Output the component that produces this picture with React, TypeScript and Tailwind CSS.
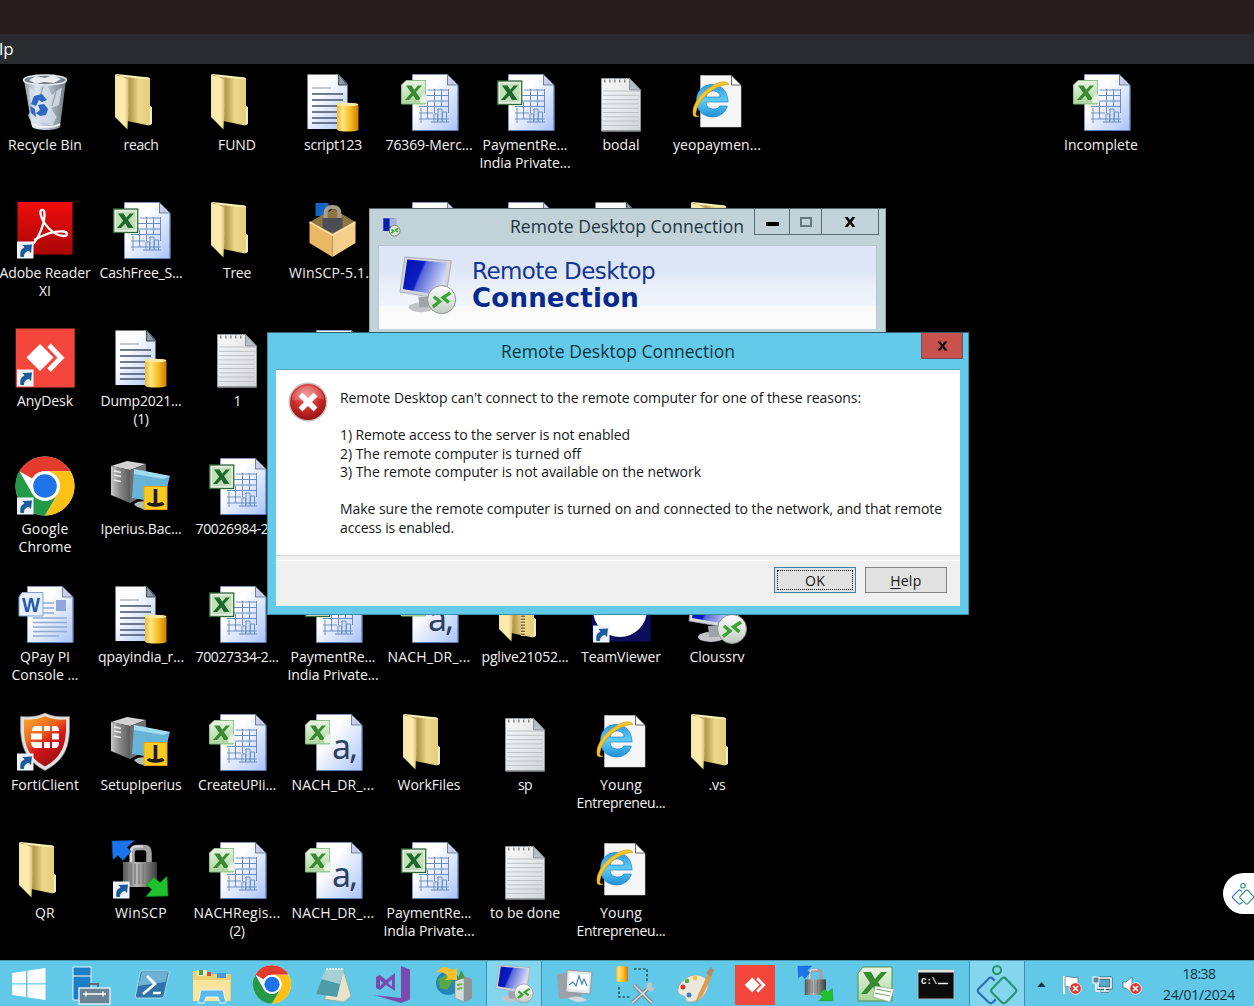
import React, { useLayoutEffect, useRef, useState } from 'react';

/* Spreads a text over a fixed width by adjusting its tracking. */
function Fit({ w, children, className = '' }: { w: number; children: string; className?: string }) {
  const ref = useRef<HTMLSpanElement>(null);
  const [ls, setLs] = useState(0);
  useLayoutEffect(() => {
    const el = ref.current;
    if (!el) return;
    setLs((w - el.getBoundingClientRect().width) / children.length);
  }, [w, children]);
  return (
    <span ref={ref} className={'inline-block whitespace-pre ' + className} style={{ letterSpacing: ls }}>
      {children}
    </span>
  );
}

const Grad = ({ id, stops, v }: { id: string; stops: [number, string][]; v?: boolean }) => (
  <linearGradient id={id} x1="0" y1="0" x2={v ? 0 : 1} y2={v ? 1 : 0}>
    {stops.map(([o, c]) => (
      <stop key={o} offset={o} stopColor={c} />
    ))}
  </linearGradient>
);

function Defs() {
  return (
    <svg className="absolute h-0 w-0">
      <defs>
        <Grad id="fFront" stops={[[0, '#f8e7a2'], [0.7, '#fbeeb4'], [1, '#d9bd62']]} />
        <Grad id="fBack" stops={[[0, '#b59a4c'], [0.35, '#b99c50'], [0.6, '#ecd78b'], [1, '#e5cb78']]} />
        <linearGradient id="page" x1="0" y1="0" x2="1" y2="1">
          <stop offset="0.35" stopColor="#fdfdff" />
          <stop offset="1" stopColor="#a9c4f5" />
        </linearGradient>
        <linearGradient id="note" x1="0" y1="0" x2="1" y2="1">
          <stop offset="0" stopColor="#fafafa" />
          <stop offset="1" stopColor="#d3d5d9" />
        </linearGradient>
        <Grad id="cyl" stops={[[0, '#f0b62c'], [0.25, '#ffe58a'], [0.6, '#fcbf24'], [1, '#c87e0a']]} />
        <Grad id="bin" stops={[[0, '#8f9ba6'], [0.3, '#dfe7ee'], [0.6, '#aebac6'], [1, '#6f7983']]} />
        <Grad id="adobe" v stops={[[0, '#f00d0d'], [1, '#a80606']]} />
        <linearGradient id="screen" x1="0" y1="0" x2="1" y2="0.35">
          <stop offset="0" stopColor="#0512a8" />
          <stop offset="0.45" stopColor="#0a1ec4" />
          <stop offset="0.5" stopColor="#5566d8" />
          <stop offset="1" stopColor="#d5dcf8" />
        </linearGradient>
        <Grad id="tower" stops={[[0, '#c9c9c9'], [0.45, '#8a8a8a'], [1, '#5b5b5b']]} />
        <Grad id="steel" stops={[[0, '#565656'], [0.4, '#b9b9b9'], [0.7, '#7b7b7b'], [1, '#3c3c3c']]} />
        <Grad id="ie" v stops={[[0, '#2a9be0'], [0.5, '#5ccdf6'], [1, '#1e8fd6']]} />
        <linearGradient id="forti" x1="0" y1="0" x2="0.6" y2="1">
          <stop offset="0" stopColor="#f9ab2c" />
          <stop offset="0.4" stopColor="#ee6a1e" />
          <stop offset="0.65" stopColor="#d4161a" />
          <stop offset="1" stopColor="#9c0f12" />
        </linearGradient>
        <Grad id="xl" v stops={[[0, '#eaf6e2'], [1, '#a8d59a']]} />
        <Grad id="disc" v stops={[[0, '#ffffff'], [1, '#c4c9c4']]} />
        <radialGradient id="err" cx="0.45" cy="0.3" r="0.75">
          <stop offset="0" stopColor="#f08080" />
          <stop offset="0.5" stopColor="#cf2b2b" />
          <stop offset="1" stopColor="#8e0d0d" />
        </radialGradient>
      </defs>
    </svg>
  );
}

const Svg = ({ children, className = 'h-16 w-16', vb = '0 0 64 64' }: { children: React.ReactNode; className?: string; vb?: string }) => (
  <svg viewBox={vb} className={'block shrink-0 overflow-visible ' + className}>
    {children}
  </svg>
);

const Shortcut = () => (
  <g>
    <rect x="4" y="41.5" width="16.5" height="17" fill="#eef2fa" />
    <path d="M7.500 57c-1-5 .5-8 4-9.500l-2-2.500 9.500-.5-1 8.500-2.300-2.300c-3 1-5 3-4.700 6.300z" fill="#1c5b9c" />
  </g>
);

const Folder = ({ zip }: { zip?: boolean }) => (
  <Svg>
    <path d="M10 3.500L41 6v28l2 1v16.500l-3 2L18 49z" fill="url(#fBack)" />
    <path d="M41 34l2 1v16.500l-2.500 1.500z" fill="#efe7c8" />
    <path d="M6 2.500l13.500 4.500v28l-1 22.500L6 45z" fill="url(#fFront)" />
    <path d="M6 2.500l2-.5L40 5.500v2L14 4.800z" fill="#f9eeb9" />
    {zip && (
      <g>
        <path d="M30 6v46" stroke="#7d6330" strokeWidth="4" />
        <path d="M30 6v46" stroke="#f5e6ae" strokeWidth="4" strokeDasharray="1.500 1.500" />
      </g>
    )}
  </Svg>
);

const Page = () => (
  <g>
    <path d="M15.500 2.500h35L61 13v45.500H15.500z" fill="url(#page)" stroke="#8ea3c8" strokeWidth=".7" />
    <path d="M50.500 2.500V13H61z" fill="#c9cfe6" stroke="#5d6880" strokeWidth=".8" />
    <path d="M16 58.500h45V14" fill="none" stroke="#5b78b5" strokeWidth="1" />
  </g>
);

const XlBadge = ({ soft }: { soft?: boolean }) => (
  <g>
    {soft ? (
      <path d="M9 8.500h19.500V32H4.500V13z" fill="url(#xl)" stroke="#8fc08a" />
    ) : (
      <g>
        <rect x="4.700" y="9" width="24" height="23.500" fill="#e3f0dd" stroke="#2f6b35" strokeWidth="1.300" />
        <rect x="7" y="11.500" width="19.500" height="18.500" fill="#c4deba" />
      </g>
    )}
    <path d="M9 13.500h5.500l2.800 4.200 3.700-4.200h4l-6 6.500 5.500 8h-5.500l-2.800-4.500-4 4.500H8l6.200-7.200z" fill={soft ? '#3c8a35' : '#1c6b2c'} />
    {soft && <path d="M22 28l5-7 3 3v7h-6z" fill="#e6f5e0" />}
  </g>
);

const Grid = () => (
  <g stroke="#6f8fc4" strokeWidth="1" fill="none">
    <path d="M31 18h20M29 23.500h23M29 29h23M22 34.500h30M22 41h14M22 47h30M37.500 17v24M44.500 17v18M51.500 17v24M30.500 30v17M24 36v15" />
    <path d="M37 50V42h3.500v8M41 50V37h4v13M45.500 50v-10h4v10M34 50h18" />
  </g>
);

const Excel = ({ soft }: { soft?: boolean }) => (
  <Svg><Page /><Grid /><XlBadge soft={soft} /></Svg>
);

const Csv = () => (
  <Svg>
    <Page />
    <text x="31" y="47" fontSize="34" textLength="26" fontFamily="'Noto Sans', sans-serif" fill="#2c4063">a,</text>
    <XlBadge soft />
  </Svg>
);

const Word = () => (
  <Svg>
    <g transform="translate(-1 0)"><Page /></g>
    <path d="M30 19h11M30 24h11M30 29h11M20 34h34M20 38.500h34M20 43h34M20 47.500h34M20 52h26" stroke="#93a9d2" strokeWidth="1.300" />
    <rect x="43" y="16" width="10" height="11" fill="#8fa5dc" />
    <path d="M9 8.500h21V32H6V13z" fill="#e9f0fb" stroke="#7da1d8" />
    <text x="9" y="28" fontSize="20" fontWeight="bold" textLength="18" lengthAdjust="spacingAndGlyphs" fontFamily="'Liberation Sans', sans-serif" fill="#1f5cad">W</text>
  </Svg>
);

const Sql = () => (
  <Svg>
    <path d="M6.500 2.500H38L46.500 12v45H6.500z" fill="url(#page)" />
    <path d="M37.500 2.500V13h9z" fill="#8f9aa8" stroke="#3c4654" />
    <path d="M11 16h19" stroke="#8a97ad" />
    <path d="M11 22h31M11 28h31M11 34h31M11 40h25M11 46h25M11 51h25" stroke="#44536c" strokeWidth="1.300" />
    <path d="M36 32.500c3-2 19-2 21.500 0V58c-3 2-18 2-21.500 0z" fill="url(#cyl)" />
    <ellipse cx="46.800" cy="32.500" rx="10.500" ry="1.800" fill="#ffe9a0" />
  </Svg>
);

const Txt = () => (
  <Svg>
    <path d="M12.500 6.500h28L51.500 18v41H12.500z" fill="url(#note)" stroke="#aab0b6" strokeWidth=".6" />
    <path d="M40.500 6.500V18h11z" fill="#b9bec5" stroke="#7d838b" strokeWidth=".8" />
    <path d="M15 9h24" stroke="#80868c" strokeWidth="3" strokeDasharray="1.500 3.500" />
    <path d="M14 19h36M14 23.300h36M14 27.600h36M14 31.900h36M14 36.200h36M14 40.500h36M14 44.800h36M14 49.100h36M14 53.400h36" stroke="#b9bec5" strokeWidth=".9" />
    <path d="M13 59h38.500" stroke="#7f8892" strokeWidth="1.400" />
  </Svg>
);

const IE = () => (
  <Svg>
    <path d="M15.500 3.500h31L56 13v42H15.500z" fill="#f6f6f6" stroke="#d8d8d8" strokeWidth=".5" />
    <path d="M46.500 3.500V13H56z" fill="#fff" stroke="#555" strokeWidth=".9" />
    <path fillRule="evenodd" d="M27 12.500c9 0 16 6.500 16 17.500H21c.5 4.500 3.500 7 7.500 7 3 0 5-1 6.500-3h7.500c-2.500 7-8 11-15 11-9.500 0-16-6.500-16-16.200 0-9.800 6.500-16.300 15.500-16.300zM21.300 25h14c-.7-3.700-3.300-6-7-6s-6.300 2.300-7 6z" fill="url(#ie)" stroke="#2788c4" strokeWidth=".7" />
    <path d="M44 13c-2-5-9-4-17 1C15 21 7 33 8 42c.5 3 3 3.500 6 2-3 .5-3.500-1-3-4 1.500-9 10-19 20-24 6-3 11-4 13-3z" fill="#f5c52c" stroke="#d59b14" strokeWidth=".6" />
  </Svg>
);

const Bin = () => (
  <Svg>
    <path d="M11 8h42l-6 47c-3 4-24 4-28 0z" fill="url(#bin)" />
    <path d="M16 15l8 6 10-8 5 10 10-8-3 18-8 3 6 8-5 10-12-5-8 4-4-10 6-8-4-6z" fill="#d9e1ea" opacity=".8" />
    <path d="M30 15l-3 10M43 20l-4 14M40 38l5 8" stroke="#94a0ad" strokeWidth="1.200" fill="none" />
    <ellipse cx="32" cy="8" rx="21.500" ry="5" fill="#74808a" stroke="#e8eef2" strokeWidth="1.500" />
    <path d="M16 8l7-4 9 2 8-3 8 4-7 4-10-1-8 2z" fill="#e9eef2" />
    <path d="M18 32l3-8 8-2 5 6-5 2-3-2-3 6zM25 33l6-1 4 5-2 6-6 1-4-3 4-3zM17 34l5 3 1 8-5-4z" fill="#2c68c4" />
    <path d="M19 52c6 4 22 4 28 0" fill="none" stroke="#eef2f4" strokeWidth="2" />
  </Svg>
);

const Adobe = () => (
  <Svg>
    <rect x="4.500" y="2" width="55" height="52.500" fill="url(#adobe)" />
    <path d="M19 45c7-7 13-22 12.500-32-.3-4.500-5-4-4 .5C29 23 40 36 51 36c4.500 0 3.500-4-.5-4.500-8.500-1-20 3-29.500 8.500" fill="none" stroke="#fff" strokeWidth="2.300" />
    <Shortcut />
  </Svg>
);

const AnyMark = () => (
  <g fill="#fff">
    <path d="M13.500 29.500L27 16l13.500 13.500L27 43z" />
    <path d="M35 18l4-4 15.500 15.500L39 45l-4-4 11.500-11.500z" transform="translate(3.500 2.500) scale(.88 .92)" />
  </g>
);

const AnyDesk = () => (
  <Svg>
    <rect x="2.700" y=".5" width="59" height="59" fill="#f4463a" />
    <AnyMark />
    <Shortcut />
  </Svg>
);

const ChromeMark = () => (
  <g>
    <circle cx="32" cy="30" r="29.500" fill="#fff" />
    <path d="M32 .5a29.500 29.500 0 0 1 25.500 14.700H32A14.800 14.800 0 0 0 19.200 22.600L6.400 15.200A29.500 29.500 0 0 1 32 .5z" fill="#e33b2e" />
    <path d="M57.600 15.200A29.500 29.500 0 0 1 32 59.500l12.800-22.100A14.800 14.800 0 0 0 45 22.800 14.800 14.800 0 0 0 32 15.200z" fill="#fbc116" />
    <path d="M6.400 15.200A29.500 29.500 0 0 0 32 59.500l12.800-22.100a14.800 14.800 0 0 1-25.600 0z" fill="#249a48" />
    <circle cx="32" cy="30" r="14.800" fill="#fff" />
    <circle cx="32" cy="30" r="11.800" fill="#1f74ea" />
  </g>
);
const Chrome = () => (<Svg><ChromeMark /><Shortcut /></Svg>);

const Iperius = () => (
  <Svg>
    <path d="M2 10L18 5l19 3-16 6z" fill="#d2d2d2" />
    <path d="M2 10l19 4v33L2 39z" fill="url(#tower)" />
    <path d="M21 14l16-6v30l-16 9z" fill="#6e6e6e" />
    <path d="M5 15l7 1.500M5 19l7 1.500M5 24l7 1.500" stroke="#eee" strokeWidth="1.500" />
    <path d="M25 13l36 7-7 27-31-5z" fill="#68b4d8" />
    <path d="M25 13l36 7-6 3-30-5z" fill="#a2dcee" />
    <path d="M25 48c6-4 14-3 20 0l-3 5c-7 1-14-1-17-5z" fill="#b7bdbf" />
    <rect x="35" y="30.500" width="23" height="23" fill="#f8ca22" stroke="#e7a60c" />
    <path d="M46.500 33v15M39 47c2 2.500 13 2.500 15.500 0" fill="none" stroke="#1d1a10" strokeWidth="3.600" />
  </Svg>
);

const Forti = () => (
  <Svg>
    <path d="M32 1c8 4 16 4 24.500 3.500.5 24 0 41-24.500 54C8 46 7 28 7.500 4.500 16 5 24 5 32 1z" fill="#dfe1e2" stroke="#888" strokeWidth=".7" />
    <path d="M32 4c7 3.500 14 4 21 3.500C53.500 29 52 43 32 54.500 12 43 10.500 29 11 7.500 18 8 25 7.500 32 4z" fill="url(#forti)" />
    <path d="M23 14h6v5h-10q0-5 4-5zM31 14h6v5h-6zM39 14h3q4 0 4 5h-7zM18 21.500h11v6H18zM39 21.500h7v6h-7zM18 30h11v6h-6q-5 0-5-6zM31 30h6v6h-6zM39 30h7q0 6-4 6h-3z" fill="#fff" />
    <Shortcut />
  </Svg>
);

const Lock = () => (
  <g>
    <path d="M23 22V13Q23 7.500 28 7.500h7q5 0 5 5.500v9" fill="none" stroke="#a3a3a3" strokeWidth="5.500" />
    <path d="M22 22V12Q22 6.500 28 6.500h6" fill="none" stroke="#dedede" strokeWidth="2" />
    <rect x="14" y="22" width="34" height="25" fill="url(#steel)" />
    <path d="M18 24v20M22 24v20M26 24v20M30 24v20M34 24v20" stroke="#6a6a6a" strokeWidth="1" />
    <path d="M3 1l22-.5-7 7 4 4-8 9-5-5-5 4z" fill="#1b74ea" stroke="#0d4db4" strokeWidth=".7" />
    <path d="M59 56l-22 .5 6-7-6-5 8-7 6 5 7-6z" fill="#22c02c" stroke="#128a1a" strokeWidth=".7" />
  </g>
);
const WinScp = () => (<Svg><Lock /><Shortcut /></Svg>);

const BoxIcon = () => (
  <Svg>
    <g transform="translate(2.500 0)">
      <path d="M12 3h13v13H12z" fill="#1465c0" />
      <path d="M6 22L30 9l22 13-23 14z" fill="#8f7640" />
      <path d="M22 20v-6q0-7 7-7t7 7v6" fill="none" stroke="#a79f8c" strokeWidth="4" />
      <path d="M19 18h20v10l-10 5-10-5z" fill="#4c4e56" />
      <path d="M6 22l23 13v22L6 43z" fill="#eab865" />
      <path d="M52 22L29 35v22l23-14z" fill="#f5cf8a" />
      <path d="M6 22l23 13 23-13" fill="none" stroke="#fce3ae" strokeWidth="1.800" />
    </g>
  </Svg>
);

const TeamViewer = () => (
  <Svg>
    <rect x="2.700" y=".5" width="59" height="57" fill="#0c0d5c" />
    <circle cx="31" cy="26" r="27" fill="#fff" />
    <path d="M7 18l14-11-2 7h24l-2-7 14 11-14 11 2-5h-9v7l-3-2-3 2v-7H19l2 5z" fill="#0c0d5c" />
    <Shortcut />
  </Svg>
);

const Monitor = () => (
  <g>
    <ellipse cx="23" cy="53" rx="13" ry="5" fill="#c2c4c8" />
    <path d="M20 42h14l-4 11h-9z" fill="#9fa3aa" />
    <path d="M6 1l48 4-6 40L1 37z" fill="#d5d7dd" stroke="#9a9da5" strokeWidth=".8" />
    <path d="M8.500 3.500L50 7l-5.500 34L4 34z" fill="url(#screen)" />
    <circle cx="44" cy="45" r="14.500" fill="url(#disc)" stroke="#8d948d" />
    <path d="M36 42l6 5-7 5.500M53 38l-7.500 5 6 5" fill="none" stroke="#37a52e" strokeWidth="3.400" />
  </g>
);
const Rdp = () => (<Svg><g transform="translate(3 0)"><Monitor /></g></Svg>);

type Item = { c: number; r: number; i: React.ReactNode; t: [string, number][] };
const P: [string, number][] = [['PaymentRe...', 85], ['India Private...', 91]];
const YE: [string, number][] = [['Young', 42], ['Entrepreneu...', 89]];
const items: Item[] = [
  { r: 1, c: 1, i: <Bin />, t: [['Recycle Bin', 74]] },
  { r: 1, c: 2, i: <Folder />, t: [['reach', 35]] },
  { r: 1, c: 3, i: <Folder />, t: [['FUND', 38]] },
  { r: 1, c: 4, i: <Sql />, t: [['script123', 58]] },
  { r: 1, c: 5, i: <Excel soft />, t: [['76369-Merc...', 87]] },
  { r: 1, c: 6, i: <Excel />, t: P },
  { r: 1, c: 7, i: <Txt />, t: [['bodal', 37]] },
  { r: 1, c: 8, i: <IE />, t: [['yeopaymen...', 88]] },
  { r: 1, c: 12, i: <Excel soft />, t: [['Incomplete', 74]] },
  { r: 2, c: 1, i: <Adobe />, t: [['Adobe Reader', 91], ['XI', 12]] },
  { r: 2, c: 2, i: <Excel />, t: [['CashFree_S...', 83]] },
  { r: 2, c: 3, i: <Folder />, t: [['Tree', 28]] },
  { r: 2, c: 4, i: <BoxIcon />, t: [['WinSCP-5.1...', 88]] },
  { r: 2, c: 5, i: <Excel />, t: [] },
  { r: 2, c: 6, i: <Excel />, t: [] },
  { r: 2, c: 7, i: <Sql />, t: [] },
  { r: 2, c: 8, i: <Folder />, t: [] },
  { r: 3, c: 1, i: <AnyDesk />, t: [['AnyDesk', 56]] },
  { r: 3, c: 2, i: <Sql />, t: [['Dump2021...', 81], ['(1)', 15]] },
  { r: 3, c: 3, i: <Txt />, t: [['1', 7]] },
  { r: 3, c: 4, i: <Excel />, t: [] },
  { r: 4, c: 1, i: <Chrome />, t: [['Google', 47], ['Chrome', 53]] },
  { r: 4, c: 2, i: <Iperius />, t: [['Iperius.Bac...', 81]] },
  { r: 4, c: 3, i: <Excel />, t: [['70026984-2...', 83]] },
  { r: 5, c: 1, i: <Word />, t: [['QPay PI', 50], ['Console ...', 67]] },
  { r: 5, c: 2, i: <Sql />, t: [['qpayindia_r...', 86]] },
  { r: 5, c: 3, i: <Excel />, t: [['70027334-2...', 83]] },
  { r: 5, c: 4, i: <Excel />, t: P },
  { r: 5, c: 5, i: <Csv />, t: [['NACH_DR_...', 83]] },
  { r: 5, c: 6, i: <Folder zip />, t: [['pglive21052...', 87]] },
  { r: 5, c: 7, i: <TeamViewer />, t: [['TeamViewer', 80]] },
  { r: 5, c: 8, i: <Rdp />, t: [['Cloussrv', 55]] },
  { r: 6, c: 1, i: <Forti />, t: [['FortiClient', 68]] },
  { r: 6, c: 2, i: <Iperius />, t: [['SetupIperius', 81]] },
  { r: 6, c: 3, i: <Excel soft />, t: [['CreateUPIi...', 78]] },
  { r: 6, c: 4, i: <Csv />, t: [['NACH_DR_...', 83]] },
  { r: 6, c: 5, i: <Folder />, t: [['WorkFiles', 63]] },
  { r: 6, c: 6, i: <Txt />, t: [['sp', 14]] },
  { r: 6, c: 7, i: <IE />, t: YE },
  { r: 6, c: 8, i: <Folder />, t: [['.vs', 17]] },
  { r: 7, c: 1, i: <Folder />, t: [['QR', 20]] },
  { r: 7, c: 2, i: <WinScp />, t: [['WinSCP', 52]] },
  { r: 7, c: 3, i: <Excel soft />, t: [['NACHRegis...', 87], ['(2)', 15]] },
  { r: 7, c: 4, i: <Csv />, t: [['NACH_DR_...', 83]] },
  { r: 7, c: 5, i: <Excel />, t: P },
  { r: 7, c: 6, i: <Txt />, t: [['to be done', 70]] },
  { r: 7, c: 7, i: <IE />, t: YE },
];

function RdcWindow() {
  return (
    <div className="absolute left-[369px] top-[144px] flex h-[190px] w-[517px] flex-col border border-[#8fa3ab] border-t-[#51626a] bg-[#c1d2d9]">
      <div className="flex h-9 items-start justify-between">
        <div className="ml-[12px] mt-[9px]">
          <Svg className="h-[19px] w-[19px]" vb="0 0 60 60">
            <path d="M4 1h34v40H4z" fill="#0a1ea8" />
            <path d="M24 1h22v26H24z" fill="#a9b4e6" />
            <circle cx="40" cy="40" r="17" fill="#e4eadf" stroke="#6f8a68" strokeWidth="3" />
            <path d="M30 36l7 6-7 6M51 32l-8 6 7 6" fill="none" stroke="#37a52e" strokeWidth="5" />
          </Svg>
        </div>
        <div className="ml-auto mr-[10px] mt-[5px] text-[17.5px] leading-6 text-[#1d343e]">
          <Fit w={234}>Remote Desktop Connection</Fit>
        </div>
        <div className="mr-[6px] flex h-[26px] w-[125px] border border-t-0 border-[#586b74]">
          <div className="flex w-[35px] items-center justify-center border-r border-[#586b74]">
            <div className="mt-[5px] h-1 w-[13px] bg-black" />
          </div>
          <div className="flex w-8 items-center justify-center border-r border-[#586b74]">
            <div className="h-[10px] w-3 border-2 border-[#68787e]" />
          </div>
          <div className="flex flex-1 items-center justify-center">
            <Svg vb="0 0 12 10" className="h-[10px] w-3"><path d="M.5 0h3.300L6 3 8.200 0h3.300L7.700 5l3.800 5H8.200L6 7l-2.200 3H.5l3.800-5z" fill="#0a0a0a" /></Svg>
          </div>
        </div>
      </div>
      <div className="mx-2 flex h-[84px] border border-b-0 border-[#b4c6d0] bg-[linear-gradient(180deg,#dce6f6_0%,#dde6f5_28%,#eaf0f9_48%,#f0f4fb_72%,#fafafb_73%,#fbfbfb_100%)]">
        <Svg className="ml-[20px] mt-[10px] h-[62px] w-[62px]"><Monitor /></Svg>
        <div className="ml-[11px] mt-[12px] font-['DejaVu_Sans',sans-serif] text-[23px] leading-[27px] text-[#123596]">
          <div><Fit w={183}>Remote Desktop</Fit></div>
          <div className="text-[26px] font-bold text-[#082a8c]"><Fit w={167}>Connection</Fit></div>
        </div>
      </div>
    </div>
  );
}

function ErrorDialog() {
  return (
    <div className="absolute left-[267px] top-[268px] flex h-[283px] w-[702px] flex-col border border-[#3f8ca6] border-t-[#2d5f70] bg-[#63cae9] px-2 pb-2 text-[14px] text-[#161616]">
      <div className="relative flex h-[37px] shrink-0 items-center justify-center border-b border-[#55a8c4] text-[17.5px] text-[#0b3441]">
        <Fit w={234}>Remote Desktop Connection</Fit>
        <div className="absolute -right-[3px] top-0 flex h-[26px] w-[42px] items-center justify-center border border-t-0 border-[#7c4a5e] bg-[#ca524c]">
          <Svg vb="0 0 12 10" className="h-[10px] w-[11px]"><path d="M.5 0h3.300L6 3 8.200 0h3.300L7.700 5l3.800 5H8.200L6 7l-2.200 3H.5l3.800-5z" fill="#160c0c" /></Svg>
        </div>
      </div>
      <div className="flex flex-1 bg-white">
        <Svg vb="0 0 40 40" className="ml-[12px] mt-[12px] h-10 w-10">
          <circle cx="20" cy="20" r="18.700" fill="url(#err)" stroke="#c3c3c3" strokeWidth="1.500" />
          <path d="M4 18a16 14 0 0 1 32 0c-8-5-20 2-32 0z" fill="#fff" opacity=".2" />
          <path d="M12.500 12.500l15 15M27.500 12.500l-15 15" stroke="#fff" strokeWidth="5.500" />
        </Svg>
        <div className="ml-3 mt-[19px] leading-[18.500px]">
          <div><Fit w={521}>Remote Desktop can't connect to the remote computer for one of these reasons:</Fit></div>
          <div className="mt-[18.500px]"><Fit w={290}>1) Remote access to the server is not enabled</Fit></div>
          <div><Fit w={241}>2) The remote computer is turned off</Fit></div>
          <div><Fit w={361}>3) The remote computer is not available on the network</Fit></div>
          <div className="mt-[18.500px]"><Fit w={602}>Make sure the remote computer is turned on and connected to the network, and that remote</Fit></div>
          <div><Fit w={114}>access is enabled.</Fit></div>
        </div>
      </div>
      <div className="flex h-[51px] shrink-0 flex-col border-t border-[#d9d9d9] bg-[#f0f0f0]">
        <div className="h-[5px] border-b border-white" />
        <div className="mt-[6px] flex justify-end gap-[9px] pr-[13px]">
          <div className="h-[26px] w-[82px] border border-[#3f81a5] bg-[#e1e1e1] p-[2px]">
            <div className="flex h-full items-center justify-center border border-dotted border-black"><Fit w={20}>OK</Fit></div>
          </div>
          <div className="flex h-[26px] w-[82px] items-center justify-center border border-[#858585] bg-[#e1e1e1]">
            <span className="underline underline-offset-2">H</span><Fit w={21}>elp</Fit>
          </div>
        </div>
      </div>
    </div>
  );
}

/* Ring above two interlocking rounded diamonds. */
const KnotMark = () => (
  <g fill="none" strokeWidth="3.400" strokeLinejoin="round">
    <circle cx="32" cy="8" r="6.500" stroke="#2a9470" />
    <path d="M30 55l-5 5q-3 2.500-6 0L2.500 44q-2.500-3 0-6L19 21.500q3-2.500 6 0l3.500 3.500" stroke="#2a6fb8" />
    <path d="M40 21.500q3-2.500 6 0L61.500 38q2.500 3 0 6L46 60q-3 2.500-6 0L24 44q-2.500-3 0-6z" stroke="#2a9470" />
  </g>
);

const S = 'h-10 w-10';
const tasks: { el: React.ReactNode; on?: boolean }[] = [
  { el: <Svg className={S} vb="0 0 40 40"><path d="M2 2h18v33H2z" fill="#1c7fc6" stroke="#e8f4fa" /><path d="M2 11h18" stroke="#fff" /><path d="M18 22v-3h9v3" fill="none" stroke="#536f80" strokeWidth="2" /><rect x="8" y="23" width="31" height="16" fill="#6a8495" stroke="#dcebf2" strokeWidth="1.500" /><path d="M12 29h23M15 26.500v5M32 26.500v5" stroke="#fff" strokeWidth="1.400" /></Svg> },
  { el: <Svg className={S} vb="0 0 40 40"><path d="M10 6h25q2.500 0 2 2.500l-5 22q-.5 2.500-3 2.500H5.500Q3 33 3.500 30.500l4.500-22Q8.500 6 10 6z" fill="#2e74a8" stroke="#bde3f2" strokeWidth=".8" /><path d="M10 7h26l-2.500 10L6 21z" fill="#6fb0d6" /><path d="M15 11l8 8-12 10M21 28h8" fill="none" stroke="#fff" strokeWidth="2.600" /></Svg> },
  { el: <Svg className={S} vb="0 0 40 40"><path d="M1 6h12l2 3h22q2 0 2 3v24H1z" fill="#edcf74" /><path d="M5 5h10v6H5z" fill="#f6edc0" /><path d="M7 5h4v5H7z" fill="#44a04c" /><path d="M15 7h4v4h-4z" fill="#d44c33" /><path d="M25 8h9v5h-9z" fill="#5493d8" /><path d="M1 15h37v21H1z" fill="#f8e59c" /><path d="M6 38l3-13h22l3 13h-6l-2-6H14l-2 6z" fill="#5ab8ea" stroke="#e5f6fd" /></Svg> },
  { el: <Svg className={S} vb="1 0 62 62"><ChromeMark /></Svg> },
  { el: <Svg className={S} vb="0 0 40 40"><path d="M30 4l8 27-7 6-20-3z" fill="#e8e3cd" stroke="#9b9679" strokeWidth=".6" /><path d="M13 4h18l-7 28-21-3z" fill="#4d9ba9" /><path d="M13 4h18l-4 15L8 14z" fill="#a6d0d3" /><path d="M13 4h18" stroke="#e6f3f2" strokeWidth="2" strokeDasharray="2 1" /></Svg> },
  { el: <Svg className={S} vb="0 0 40 40"><path d="M28 1l9 3.500v30L28 38 1 30l27 3z" fill="#7c4bb0" /><path d="M3 12l4-2 6 5 9-7v18l-9-6-6 5-4-2zM7 15v6l3-3zM15 18l4 3.500v-7z" fill="#7c4bb0" fillRule="evenodd" /></Svg> },
  { el: <Svg className={S} vb="0 0 40 40"><circle cx="14" cy="18" r="12" fill="#2585b4" /><path d="M4 14l8-4 7 6-6 9-7-2z" fill="#5aa545" /><path d="M2 8Q9-2 18 5l5-2v12H11l3-3Q9 5 2 8z" fill="#f6c02c" /><path d="M24 14l3-9 5 9z" fill="#3e9b45" /><path d="M21 16l9-3v24l-9-4z" fill="#d8dcd9" stroke="#7f8a8c" strokeWidth=".6" /><path d="M30 11l8 3v20l-8 3z" fill="#8d9495" /><path d="M23 20l5-1M23 24l5-1" stroke="#6cb83f" strokeWidth="2" /></Svg> },
  { el: <Svg className={S} vb="-2 1 62 62"><Monitor /></Svg>, on: true },
  { el: <Svg className={S} vb="0 0 40 40"><path d="M3 9l26-3-2 26-22 2z" fill="#9ba1a8" /><path d="M13 5l25 2-2 22-24-2z" fill="#e4e8eb" stroke="#9399a0" /><path d="M15 8l20 1.500-1.500 16L15 24z" fill="#fff" /><path d="M15 20l4-3 3 4 3-10 3 8 2-5 3 7" fill="none" stroke="#4486bd" strokeWidth="1.200" /><path d="M14 33q10-4 19 2-9 5-19-2z" fill="#d6d9dc" /></Svg> },
  { el: <Svg className={S} vb="0 0 40 40"><path d="M1 2c3-1.500 9-1.500 12 0v14c-3 1.500-9 1.500-12 0z" fill="url(#cyl)" /><path d="M19 4h13v12M4 22v10h11" fill="none" stroke="#1c5962" strokeWidth="1.700" strokeDasharray="2.500 2" /><path d="M17 38l18-16M37 38L19 20" stroke="#7e8d94" strokeWidth="4" /><path d="M17 38l18-16M37 38L19 20" stroke="#d8e0e2" strokeWidth="1.600" /><path d="M33 17l4 1v4l3 1-3 4-6-3z" fill="#b9c6ca" /></Svg> },
  { el: <Svg className={S} vb="0 0 40 40"><path d="M3 24C6 11 24 6 31 14c6 8-2 23-17 23-4 0-2-5-5-6s-7-2-6-7z" fill="#ece8de" stroke="#a3a59b" strokeWidth=".7" /><circle cx="8" cy="22" r="2.500" fill="#d8352c" /><circle cx="12" cy="16" r="2.300" fill="#4dae41" /><circle cx="20" cy="13" r="2.300" fill="#f1c232" /><circle cx="14" cy="30" r="2.500" fill="#3e7cc8" /><path d="M34 7L24 28l-4 10 8-8 9-20z" fill="#dd9a48" /><path d="M31 8l5-6 3 3-3 7z" fill="#ad8d6b" /></Svg> },
  { el: <Svg className="h-10 w-10" vb="2.500 .5 59 59"><rect x="2.500" y=".5" width="59" height="59" fill="#f4463a" /><g transform="translate(6 6) scale(.81)"><AnyMark /></g></Svg> },
  { el: <Svg className={S} vb="0 -1 64 64"><Lock /></Svg> },
  { el: <Svg className={S} vb="0 0 40 40"><path d="M7 2h29v34H2V8z" fill="url(#xl)" stroke="#528d4d" /><path d="M7 7h8l4 7 6-7h6L22 17l7 12h-8l-4-7-6 7H5l9-11z" fill="#388a32" /><path d="M19 21l19 3-4 13-17-5z" fill="#fff" stroke="#80a97c" strokeWidth=".7" /><path d="M20 24l15 3M19 28l15 3" stroke="#72a36b" /></Svg> },
  { el: <Svg className={S} vb="1 0 40 40"><rect x="2" y="5" width="36" height="29" fill="#0b0b0b" stroke="#a8b1b5" /><path d="M2 5h36v2.500H2z" fill="#dfe3e5" /><text x="5" y="19" fontSize="9" fontFamily="'Liberation Mono', monospace" fontWeight="bold" fill="#f2f2f2">C:\</text><path d="M22 18.500h10" stroke="#f2f2f2" strokeWidth="1.500" /></Svg> },
  { el: <Svg className={S}><KnotMark /></Svg>, on: true },
];

const RedX = () => (
  <g><circle cx="13.500" cy="13.500" r="5.800" fill="#d83a34" stroke="#fff" strokeWidth=".8" /><path d="M11 11l5 5M16 11l-5 5" stroke="#fff" strokeWidth="1.600" /></g>
);

function Taskbar() {
  return (
    <div className="flex h-[46px] w-[1254px] border-t border-[#4a93ab] bg-[#62c8e8]">
      <div className="flex w-[61px] items-center pl-[12px]">
        <Svg vb="0 0 34 32" className="h-8 w-[34px]"><path d="M0 5l14-2v12.200H0zM15.500 2.700L33.500 0v15.200h-18zM0 16.600h14V29L0 27zM15.500 16.600h18V32l-18-2.800z" fill="#fff" /></Svg>
      </div>
      {tasks.map((t, k) => (
        <div key={k} className="flex w-[60.400px] shrink-0 justify-center">
          <div className={t.on ? 'flex w-14 items-center justify-center border-x border-[#3b91ad] bg-[#83d6ee] pt-[2px]' : 'flex w-14 items-center justify-center pt-[2px]'}>{t.el}</div>
        </div>
      ))}
      <div className="flex items-center gap-[10px] pl-[10px] pt-[2px]">
        <Svg vb="0 0 10 6" className="mr-[6px] h-[5px] w-[9px]"><path d="M0 6l5-6 5 6z" fill="#103349" /></Svg>
        <Svg vb="0 0 20 20" className="h-5 w-5"><path d="M2 1v18" stroke="#fff" strokeWidth="2" /><path d="M3 2c4-2 7 2 13 0v10c-5 2-9-1-13 0z" fill="#fff" stroke="#55717d" strokeWidth=".8" /><RedX /></Svg>
        <Svg vb="0 0 20 20" className="h-5 w-5"><path d="M6 3h13v10H6zM9 16h8M13 13v3" fill="#5ba6c2" stroke="#2d5260" strokeWidth="2.800" /><path d="M6 3h13v10H6zM9 16h8M13 13v3M4 9v7h4" fill="none" stroke="#fff" strokeWidth="1.600" /><rect x="1" y="2" width="6" height="6" fill="#5d8796" stroke="#fff" /></Svg>
        <Svg vb="0 0 20 20" className="h-5 w-5"><path d="M1 7h3l6-5v16l-6-5H1z" fill="#fff" stroke="#4a6e7c" strokeWidth=".8" /><RedX /></Svg>
      </div>
      <div className="ml-auto mr-[19px] flex flex-col items-center pt-[3px] text-[14px] leading-[20.500px] text-[#14323e]">
        <Fit w={33}>18:38</Fit>
        <Fit w={72}>24/01/2024</Fit>
      </div>
    </div>
  );
}

export default function App() {
  return (
    <div className="flex h-[1006px] w-[1254px] flex-col overflow-hidden bg-black font-['Open_Sans','Noto_Sans',sans-serif]">
      <Defs />
      <div className="h-[34px] shrink-0 bg-[#271d1c]" />
      <div className="flex h-[30px] shrink-0 items-center bg-[#292a2d] text-[17px] text-white"><span className="-ml-[1px]">lp</span></div>
      <div className="relative h-[896px] shrink-0 overflow-hidden">
        <div className="-ml-[3px] grid w-[1152px] grid-cols-[repeat(12,96px)] grid-rows-[repeat(7,128px)] pt-2">
          {items.map((d) => (
            <div key={d.r + '-' + d.c} className="flex flex-col items-center text-[14px] leading-[18.400px] text-[#f2f2f2]" style={{ gridColumn: d.c, gridRow: d.r }}>
              {d.i}
              {d.t.map(([s, w]) => (
                <Fit key={s} w={w}>{s}</Fit>
              ))}
            </div>
          ))}
        </div>
        <RdcWindow />
        <ErrorDialog />
        <div className="absolute left-[1223px] top-[809px] flex h-[41px] w-[60px] items-center rounded-full bg-white pl-[9px]">
          <Svg className="h-[22px] w-[22px]"><KnotMark /></Svg>
        </div>
      </div>
      <Taskbar />
    </div>
  );
}
